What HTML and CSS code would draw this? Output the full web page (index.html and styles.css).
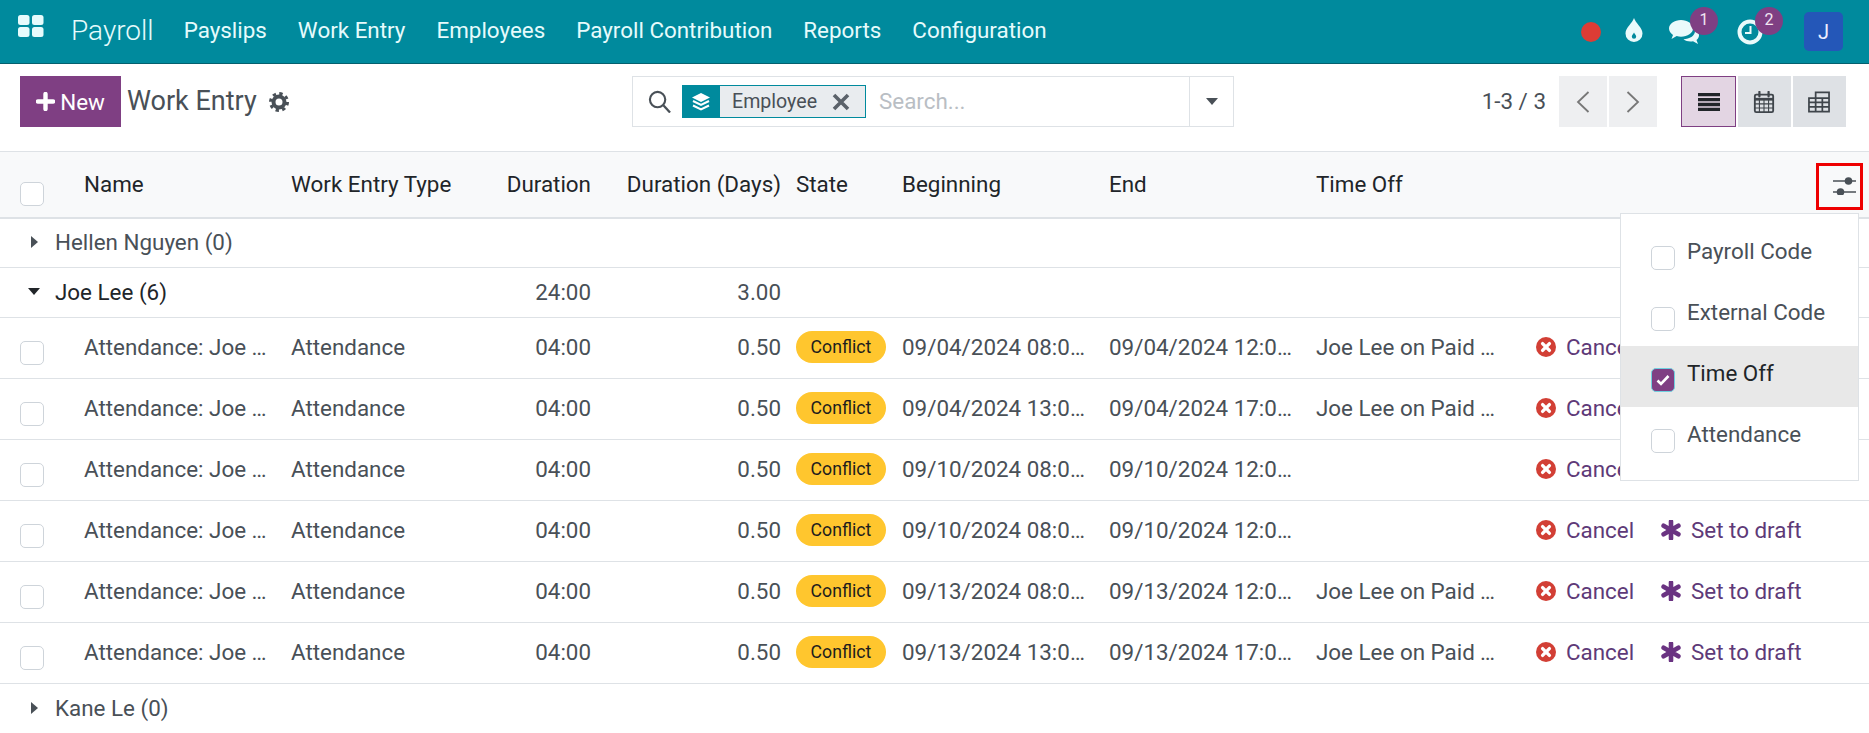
FILE: index.html
```html
<!DOCTYPE html>
<html lang="en">
<head>
<meta charset="utf-8">
<title>Work Entry</title>
<link rel="stylesheet" href="styles.css">
</head>
<body>
<svg class="defs" width="0" height="0" aria-hidden="true">
  <symbol id="i-cancel" viewBox="0 0 20 20"><circle cx="10" cy="10" r="10" fill="#d23f35"/><path d="M6.6 6.6l6.8 6.8M13.4 6.6l-6.8 6.8" stroke="#fff" stroke-width="3.4" stroke-linecap="round"/></symbol>
  <symbol id="i-star" viewBox="0 0 20 20"><path d="M10 1.5v17M2.6 5.7l14.8 8.6M17.4 5.7L2.6 14.3" stroke="#6a3382" stroke-width="4.6" stroke-linecap="round"/></symbol>
</svg>
<header class="topbar">
  <svg class="apps" viewBox="0 0 26 22"><rect x="0" y="0" width="11.500" height="10" rx="2.500"/><rect x="14" y="0" width="11.500" height="10" rx="2.500"/><rect x="0" y="12" width="11.500" height="10" rx="2.500"/><rect x="14" y="12" width="11.500" height="10" rx="2.500"/></svg>
  <span class="brand">Payroll</span>
  <nav class="menu">
    <a>Payslips</a><a>Work Entry</a><a>Employees</a><a>Payroll Contribution</a><a>Reports</a><a>Configuration</a>
  </nav>
  <div class="systray">
    <span class="dot"></span>
    <svg class="drop" viewBox="0 0 18 24"><path d="M9 0c1.500 5 8.500 9.500 8.500 15.500a8.500 8.500 0 0 1-17 0C.5 9.500 7.500 5 9 0z" fill="#eafafb"/><path d="M9 14.500c.5 1.500 2.200 2.400 2.200 4a2.200 2.200 0 0 1-4.400 0c0-1.600 1.700-2.500 2.200-4z" fill="#008a9d"/></svg>
    <span class="tray-item chat">
      <svg viewBox="0 0 30 24"><path d="M12 0C5.500 0 0 3.700 0 8.500c0 2.600 1.500 4.800 4 6.400L2.500 19l5.200-2.900c1.400.4 2.800.6 4.300.6 6.500 0 12-3.700 12-8.200S18.500 0 12 0z" fill="#eafafb"/><path d="M26 11c0 5-5.500 8-11.500 8.300 1.800 1.400 4.300 2.200 7 2.200.8 0 1.700-.1 2.500-.3l5 2.800-1.500-4c1.700-1.300 2.500-3 2.500-4.800 0-1.600-1-3.200-4-4.200z" fill="#eafafb"/></svg>
      <b class="badge">1</b>
    </span>
    <span class="tray-item clock">
      <svg viewBox="0 0 26 26"><circle cx="13" cy="13" r="10.500" fill="none" stroke="#eafafb" stroke-width="4"/><path d="M13.500 7v7H8" fill="none" stroke="#eafafb" stroke-width="2"/></svg>
      <b class="badge">2</b>
    </span>
    <span class="avatar">J</span>
  </div>
</header>

<section class="panel">
  <div class="panel-left">
    <button class="btn-new"><svg class="plus" viewBox="0 0 19 19"><path d="M9.500 2v15M2 9.500h15" stroke="#fff" stroke-width="4.400" stroke-linecap="round"/></svg>New</button>
    <h1 class="title">Work Entry</h1>
    <svg class="gear" viewBox="0 0 20 20"><circle cx="10" cy="10" r="5.500" fill="none" stroke="#495057" stroke-width="4"/><circle cx="10" cy="10" r="8.500" fill="none" stroke="#495057" stroke-width="3" stroke-dasharray="3.340 3.340"/></svg>
  </div>
  <div class="search">
    <svg class="mag" viewBox="0 0 24 24"><circle cx="10" cy="10" r="8" fill="none" stroke="#495057" stroke-width="2.200"/><path d="M16 16l7 7.500" stroke="#495057" stroke-width="2.400"/></svg>
    <span class="facet">
      <span class="facet-icon"><svg viewBox="0 0 20 20"><path d="M10 1l9 4.500-9 4.500-9-4.500z" fill="#fff"/><path d="M2 9l8 4 8-4M2 13.500l8 4 8-4" fill="none" stroke="#fff" stroke-width="2"/></svg></span>
      <span class="facet-text">Employee</span>
      <svg class="facet-x" viewBox="0 0 18 18"><path d="M2 2l14 14M16 2L2 16" stroke="#5b626a" stroke-width="3.600"/></svg>
    </span>
    <span class="placeholder">Search...</span>
    <span class="search-caret"><i class="caret-down"></i></span>
  </div>
  <div class="panel-right">
    <span class="pager">1-3 / 3</span>
    <span class="pager-btns">
      <button class="pbtn"><svg viewBox="0 0 14 24"><path d="M12.500 2L2 12l10.500 10" fill="none" stroke="#777" stroke-width="1.800"/></svg></button>
      <button class="pbtn"><svg viewBox="0 0 14 24"><path d="M1.500 2L12 12 1.500 22" fill="none" stroke="#777" stroke-width="1.800"/></svg></button>
    </span>
    <span class="views">
      <button class="vbtn active"><svg viewBox="0 0 23 19"><path d="M0 0h23v3.500H0zM0 5.200h23v3.500H0zM0 10.400h23v3.500H0zM0 15.500h23V19H0z" fill="#212529"/></svg></button>
      <button class="vbtn"><svg viewBox="0 0 22 24"><rect x="1" y="4" width="20" height="19" rx="1.500" fill="none" stroke="#3f454b" stroke-width="2"/><path d="M1 9h20" stroke="#3f454b" stroke-width="3"/><path d="M6 9v14M11 9v14M16 9v14M1 14h20M1 18.500h20" stroke="#3f454b" stroke-width="1.200"/><path d="M6 1v5M16 1v5" stroke="#3f454b" stroke-width="2.400" stroke-linecap="round"/></svg></button>
      <button class="vbtn"><svg viewBox="0 0 23 22"><path d="M8 7V1h14v20H1V7h21M1 11.500h21M1 16h21M8 7v14M15 7v14" fill="none" stroke="#3f454b" stroke-width="1.800"/></svg></button>
    </span>
  </div>
</section>

<main class="list">
  <table class="grid">
    <colgroup>
      <col class="c-sel"><col class="c-name"><col class="c-type"><col class="c-dur"><col class="c-days"><col class="c-state"><col class="c-date"><col class="c-date2"><col class="c-off"><col>
    </colgroup>
    <thead>
      <tr>
        <th><span class="check check-head"></span></th>
        <th>Name</th><th>Work Entry Type</th><th class="num dur">Duration</th><th class="num">Duration (Days)</th><th class="state">State</th><th>Beginning</th><th>End</th><th>Time Off</th><th></th>
      </tr>
    </thead>
    <tbody>
      <tr class="group"><td colspan="10"><span class="g-name"><i class="caret-right"></i>Hellen Nguyen (0)</span></td></tr>
      <tr class="group open"><td colspan="3"><span class="g-name"><i class="caret-down dark"></i>Joe Lee (6)</span></td><td class="num dur">24:00</td><td class="num">3.00</td><td colspan="5"></td></tr>
      <tr><td><span class="check"></span></td><td>Attendance: Joe Lee</td><td>Attendance</td><td class="num dur">04:00</td><td class="num">0.50</td><td class="state"><span class="pill">Conflict</span></td><td>09/04/2024 08:00:00</td><td>09/04/2024 12:00:00</td><td>Joe Lee on Paid Time Off</td><td class="acts"><a class="act"><svg class="ai"><use href="#i-cancel"/></svg>Cancel</a><a class="act"><svg class="ai"><use href="#i-star"/></svg>Set to draft</a></td></tr>
      <tr><td><span class="check"></span></td><td>Attendance: Joe Lee</td><td>Attendance</td><td class="num dur">04:00</td><td class="num">0.50</td><td class="state"><span class="pill">Conflict</span></td><td>09/04/2024 13:00:00</td><td>09/04/2024 17:00:00</td><td>Joe Lee on Paid Time Off</td><td class="acts"><a class="act"><svg class="ai"><use href="#i-cancel"/></svg>Cancel</a><a class="act"><svg class="ai"><use href="#i-star"/></svg>Set to draft</a></td></tr>
      <tr><td><span class="check"></span></td><td>Attendance: Joe Lee</td><td>Attendance</td><td class="num dur">04:00</td><td class="num">0.50</td><td class="state"><span class="pill">Conflict</span></td><td>09/10/2024 08:00:00</td><td>09/10/2024 12:00:00</td><td></td><td class="acts"><a class="act"><svg class="ai"><use href="#i-cancel"/></svg>Cancel</a><a class="act"><svg class="ai"><use href="#i-star"/></svg>Set to draft</a></td></tr>
      <tr><td><span class="check"></span></td><td>Attendance: Joe Lee</td><td>Attendance</td><td class="num dur">04:00</td><td class="num">0.50</td><td class="state"><span class="pill">Conflict</span></td><td>09/10/2024 08:00:00</td><td>09/10/2024 12:00:00</td><td></td><td class="acts"><a class="act"><svg class="ai"><use href="#i-cancel"/></svg>Cancel</a><a class="act"><svg class="ai"><use href="#i-star"/></svg>Set to draft</a></td></tr>
      <tr><td><span class="check"></span></td><td>Attendance: Joe Lee</td><td>Attendance</td><td class="num dur">04:00</td><td class="num">0.50</td><td class="state"><span class="pill">Conflict</span></td><td>09/13/2024 08:00:00</td><td>09/13/2024 12:00:00</td><td>Joe Lee on Paid Time Off</td><td class="acts"><a class="act"><svg class="ai"><use href="#i-cancel"/></svg>Cancel</a><a class="act"><svg class="ai"><use href="#i-star"/></svg>Set to draft</a></td></tr>
      <tr><td><span class="check"></span></td><td>Attendance: Joe Lee</td><td>Attendance</td><td class="num dur">04:00</td><td class="num">0.50</td><td class="state"><span class="pill">Conflict</span></td><td>09/13/2024 13:00:00</td><td>09/13/2024 17:00:00</td><td>Joe Lee on Paid Time Off</td><td class="acts"><a class="act"><svg class="ai"><use href="#i-cancel"/></svg>Cancel</a><a class="act"><svg class="ai"><use href="#i-star"/></svg>Set to draft</a></td></tr>
      <tr class="group last"><td colspan="10"><span class="g-name"><i class="caret-right"></i>Kane Le (0)</span></td></tr>
    </tbody>
  </table>

  <div class="col-toggle">
    <svg viewBox="0 0 23 18"><path d="M0 4h23M0 15h23" stroke="#495057" stroke-width="1.500"/><circle cx="15.500" cy="4" r="3.800" fill="#495057"/><circle cx="7.500" cy="15" r="3.800" fill="#495057"/></svg>
  </div>
  <div class="col-menu">
    <label class="col-item"><span class="check"></span><span class="col-label">Payroll Code</span></label>
    <label class="col-item"><span class="check"></span><span class="col-label">External Code</span></label>
    <label class="col-item hover"><span class="check checked"><svg viewBox="0 0 14 12"><path d="M1.500 6.500l3.500 3.500 7.500-8" fill="none" stroke="#fff" stroke-width="2.600"/></svg></span><span class="col-label">Time Off</span></label>
    <label class="col-item"><span class="check"></span><span class="col-label">Attendance</span></label>
  </div>
</main>
</body>
</html>
```
FILE: styles.css
```css
* { box-sizing: border-box; }
html, body { margin: 0; height: 733px; overflow: hidden; background: #fff; }
body { font-family: Roboto, "Liberation Sans", sans-serif; font-size: 22.4px; color: #495057; }
.defs { position: absolute; }
a { color: inherit; text-decoration: none; }
button { font: inherit; border: 0; padding: 0; cursor: pointer; }

/* top bar */
.topbar { height: 64px; background: #008a9d; border-bottom: 1px solid #04606e; display: flex; align-items: center; color: #e6fbfc; padding-left: 18px; }
.apps { width: 26px; height: 22px; fill: #e6fbfc; margin-top: -11px; margin-right: 27px; }
.brand { font-size: 28px; margin-right: 30px; margin-top: -3px; font-weight: 300; }
.menu { display: flex; gap: 31px; margin-top: -3px; }
.systray { margin-left: auto; display: flex; align-items: center; position: relative; padding-right: 26px; height: 100%; }
.dot { width: 20px; height: 20px; border-radius: 50%; background: #dc3c35; margin-right: 24px; }
.drop { width: 18px; height: 24px; margin-top: -4px; margin-right: 26px; }
.tray-item { position: relative; display: block; }
.chat { width: 30px; height: 24px; margin-right: 38px; }
.chat svg { width: 30px; height: 24px; display: block; }
.clock { width: 26px; height: 26px; margin-right: 41px; }
.clock svg { width: 26px; height: 26px; display: block; }
.badge { position: absolute; top: -13px; left: 21px; width: 28px; height: 28px; border-radius: 50%; background: #7f3f83; color: #f1e6f2; font-weight: 400; font-size: 16px; line-height: 26px; text-align: center; }
.clock .badge { left: 18px; top: -12px; }
.avatar { width: 39px; height: 39px; border-radius: 5px; background: #2457b8; color: #eef; font-size: 20px; display: flex; align-items: center; justify-content: center; }

/* control panel */
.panel { height: 87px; padding: 12px 23px 0 20px; display: grid; grid-template-columns: 612px 602px 1fr; align-items: start; }
.panel-left { display: flex; align-items: center; height: 51px; }
.btn-new { width: 101px; height: 51px; background: #7f3f83; color: #fff; display: flex; align-items: center; justify-content: center; }
.plus { width: 19px; height: 19px; margin-right: 5px; }
.title { font-size: 27px; font-weight: 400; margin: -2px 0 0 6px; color: #495057; }
.gear { width: 20px; height: 20px; margin-left: 12px; }
.search { height: 51px; border: 1px solid #dee2e6; display: flex; align-items: center; padding-left: 15px; position: relative; }
.mag { width: 23px; height: 23px; margin-right: 11px; }
.facet { height: 33px; width: 184px; display: flex; align-items: center; background: #e9ecef; border: 1px solid #008a9d; font-size: 19.600px; }
.facet-icon { width: 38px; height: 33px; margin: -1px 0 -1px -1px; background: #008a9d; display: flex; align-items: center; justify-content: center; flex: none; }
.facet-icon svg { width: 20px; height: 20px; }
.facet-text { margin-left: 12px; }
.facet-x { width: 18px; height: 18px; margin-left: 15px; }
.placeholder { color: #b9bec4; margin-left: 13px; margin-top: -1px; }
.search-caret { position: absolute; right: 0; top: 0; bottom: 0; width: 44px; border-left: 1px solid #dee2e6; display: flex; align-items: center; justify-content: center; }
.caret-down { display: inline-block; width: 0; height: 0; border-left: 6.500px solid transparent; border-right: 6.500px solid transparent; border-top: 7px solid #495057; }
.caret-down.dark { border-top-color: #212529; }
.caret-right { display: inline-block; width: 0; height: 0; border-top: 6.500px solid transparent; border-bottom: 6.500px solid transparent; border-left: 7px solid #495057; }
.panel-right { display: flex; align-items: center; justify-content: flex-end; height: 51px; }
.pager { margin-right: 13px; margin-top: -1px; }
.pager-btns { display: flex; gap: 2px; margin-right: 24px; }
.pbtn { width: 48px; height: 51px; background: #eeeff1; display: flex; align-items: center; justify-content: center; }
.pbtn svg { width: 14px; height: 24px; }
.views { display: flex; gap: 2px; }
.vbtn { width: 53px; height: 51px; background: #dee1e5; display: flex; align-items: center; justify-content: center; }
.vbtn svg { width: 22px; height: 22px; margin-left: -2px; }
.vbtn.active { width: 55px; background: #e3d5e3; border: 1px solid #7f3f83; }
.vbtn.active svg { margin-left: 0; }

/* list */
.list { position: relative; }
.grid { width: 100%; table-layout: fixed; border-collapse: separate; border-spacing: 0; }
.c-sel { width: 72px; } .c-name { width: 207px; } .c-type { width: 211px; } .c-dur { width: 107px; } .c-days { width: 192px; }
.c-state { width: 101px; } .c-date { width: 207px; } .c-date2 { width: 207px; } .c-off { width: 203px; }
th, td { padding: 0 12px 2px; text-align: left; white-space: nowrap; overflow: hidden; text-overflow: ellipsis; border-bottom: 1px solid #dee2e6; font-weight: 400; }
thead tr { height: 68px; }
th { background: #f8f9fa; color: #212529; border-top: 1px solid #dee2e6; border-bottom-width: 2px; }
tbody tr { height: 61px; }
tbody tr.group { height: 49px; }
tbody tr.group.open { height: 50px; color: #212529; }
tbody tr.last td { border-bottom: 0; }
.open .num { color: #495057; }
th:first-child, td:first-child { padding: 0; overflow: visible; }
.num { text-align: right; padding-right: 8px; padding-left: 0; }
.num.dur { padding-right: 6px; }
.state { padding-left: 7px; overflow: visible; }
.g-name { display: flex; align-items: center; height: 100%; padding-left: 31px; padding-bottom: 2px; }
.g-name i { margin-right: 17px; }
.open .g-name { padding-left: 28px; }
.open .g-name i { margin-right: 15px; }
.check { display: block; width: 24px; height: 24px; border: 1px solid #ced4da; border-radius: 5px; background: #fff; margin: 10px 0 0 20px; }
.check-head { margin-top: 18px; }
.pill { display: inline-block; vertical-align: top; margin-top: -1px; width: 90px; height: 32px; line-height: 32px; border-radius: 16px; background: #ffc62e; color: #1d1d1d; font-size: 17.700px; text-align: center; }
.acts { padding: 2px 0 2px 29px; overflow: visible; }
.act { display: inline-flex; align-items: center; color: #5e3a78; }
.act:first-child { width: 125px; }
.ai { width: 20px; height: 20px; margin-right: 10px; }

/* column chooser */
.col-toggle { position: absolute; top: 12px; right: 6px; width: 47px; height: 47px; border: 3px solid #ee0000; display: flex; align-items: center; justify-content: center; }
.col-toggle svg { width: 23px; height: 18px; margin-left: 10px; margin-top: -1px; }
.col-menu { position: absolute; top: 62px; right: 10px; width: 239px; height: 268px; background: #fff; border: 1px solid #dee2e6; padding: 10px 0; }
.col-item { display: flex; height: 61px; padding-left: 30px; align-items: flex-start; }
.col-item .check { margin: 22px 0 0 0; flex: none; }
.col-label { margin: 14px 0 0 12px; }
.col-item.hover { background: #e8e8e8; color: #212529; }
.check.checked { background: #7f3f83; border: 1px solid #6fd0e0; display: flex; align-items: center; justify-content: center; }
.check.checked svg { width: 14px; height: 12px; }
```
